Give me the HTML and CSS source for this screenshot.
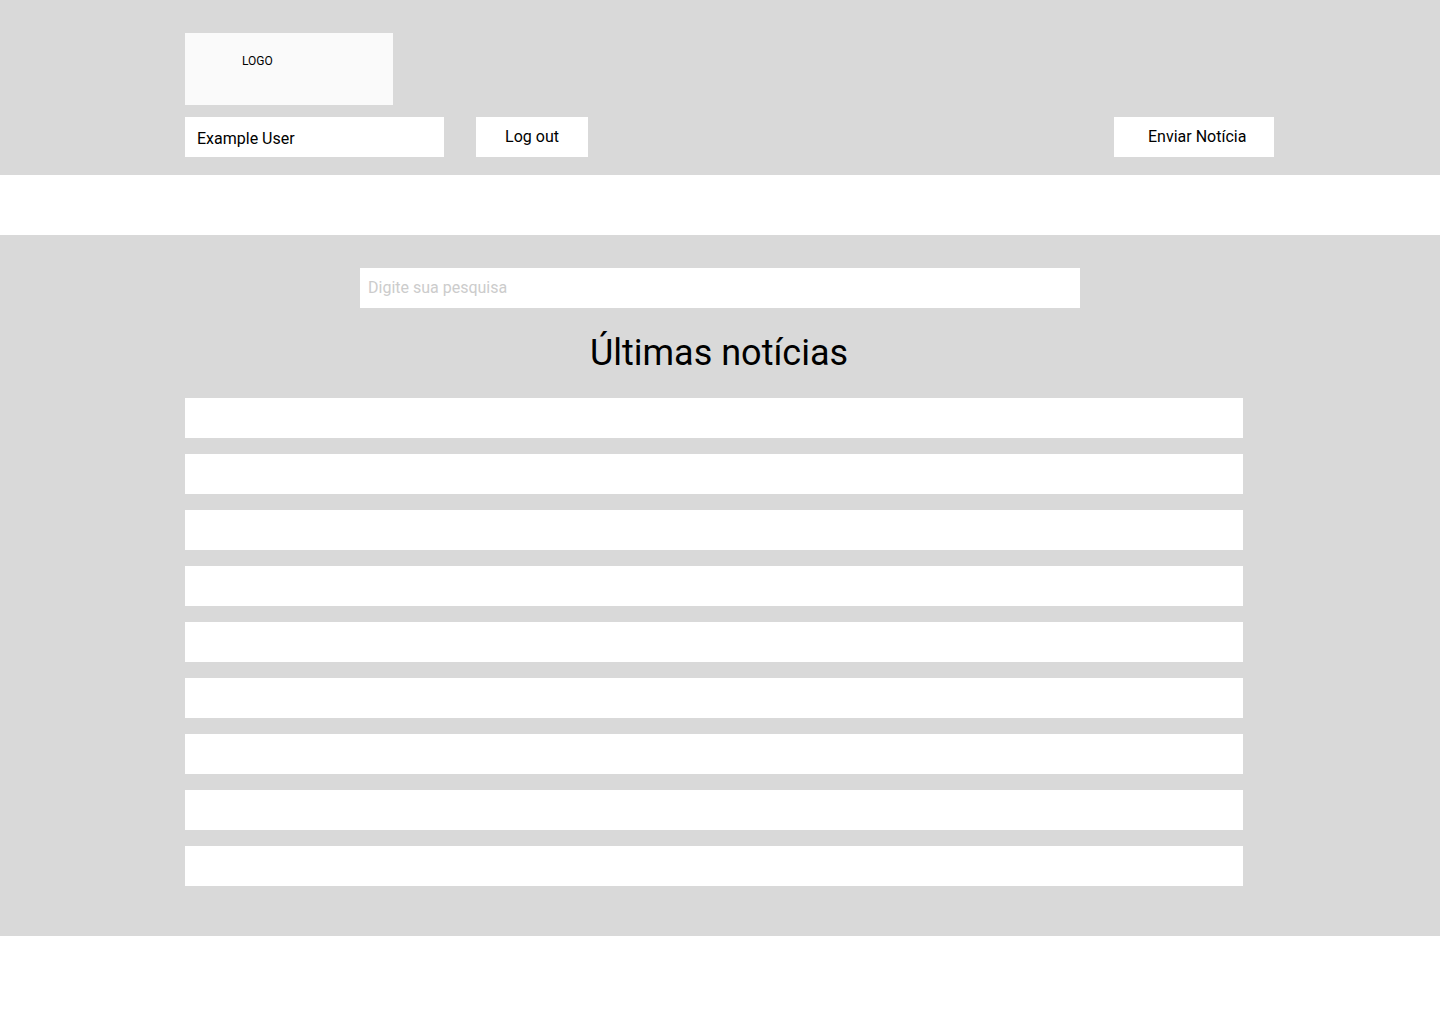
FILE: index.html
```html
<!DOCTYPE html>
<html lang="pt">
<head>
<meta charset="utf-8">
<title>Últimas notícias</title>
<link rel="stylesheet" href="styles.css">
</head>
<body>
<header class="topbar">
  <div class="topbar-inner">
    <div class="logo"><span class="logo-text">LOGO</span></div>
    <div class="toolbar">
      <div class="user-box">Example User</div>
      <button class="btn btn-logout">Log out</button>
      <button class="btn btn-send">Enviar Notícia</button>
    </div>
  </div>
</header>
<div class="spacer"></div>
<main class="news">
  <input class="search" type="text" placeholder="Digite sua pesquisa">
  <h1 class="news-title">Últimas notícias</h1>
  <ul class="news-list">
    <li class="news-item"></li>
    <li class="news-item"></li>
    <li class="news-item"></li>
    <li class="news-item"></li>
    <li class="news-item"></li>
    <li class="news-item"></li>
    <li class="news-item"></li>
    <li class="news-item"></li>
    <li class="news-item"></li>
  </ul>
</main>
</body>
</html>
```
FILE: styles.css
```css
* { box-sizing: border-box; }
html, body {
  margin: 0;
  padding: 0;
  background: #ffffff;
  font-family: Roboto, "Liberation Sans", Arial, sans-serif;
  color: #000;
}
.topbar {
  background: #d9d9d9;
  height: 175px;
  padding-top: 33px;
}
.topbar-inner {
  width: 1089px;
  margin-left: 185px;
}
.logo {
  width: 208px;
  height: 72px;
  background: #fafafa;
  padding: 21px 0 0 57px;
}
.logo-text {
  display: block;
  font-size: 12px;
  line-height: 14px;
  color: #000;
}
.toolbar {
  display: flex;
  align-items: stretch;
  margin-top: 12px;
  height: 40px;
}
.user-box {
  width: 259px;
  background: #fff;
  font-size: 16px;
  line-height: 40px;
  padding: 2px 0 0 12px;
  color: #000;
}
.btn {
  border: 0;
  margin: 0;
  background: #fff;
  font-family: Roboto, "Liberation Sans", Arial, sans-serif;
  font-size: 16px;
  line-height: 40px;
  color: #000;
  padding: 0;
  height: 40px;
}
.btn-logout {
  width: 112px;
  margin-left: 32px;
  text-align: center;
}
.btn-send {
  width: 160px;
  margin-left: auto;
  text-align: left;
  padding-left: 34px;
}
.spacer { height: 60px; }
.news {
  background: #d9d9d9;
  padding: 33px 0 50px;
  display: flex;
  flex-direction: column;
  align-items: center;
}
.search {
  width: 720px;
  height: 40px;
  border: 0;
  outline: none;
  background: #fff;
  padding: 0 8px 2px;
  font-family: Roboto, "Liberation Sans", Arial, sans-serif;
  font-size: 16px;
  color: #000;
}
.search::placeholder { color: #cccccc; }
.news-title {
  margin: 24px 0 24px;
  font-size: 36px;
  line-height: 42px;
  font-weight: 400;
  text-align: center;
  padding-right: 2px;
}
.news-list {
  list-style: none;
  margin: 0;
  padding: 0;
  width: 1058px;
  align-self: flex-start;
  margin-left: 185px;
  display: flex;
  flex-direction: column;
  gap: 16px;
}
.news-item {
  height: 40px;
  background: #fff;
}
```
